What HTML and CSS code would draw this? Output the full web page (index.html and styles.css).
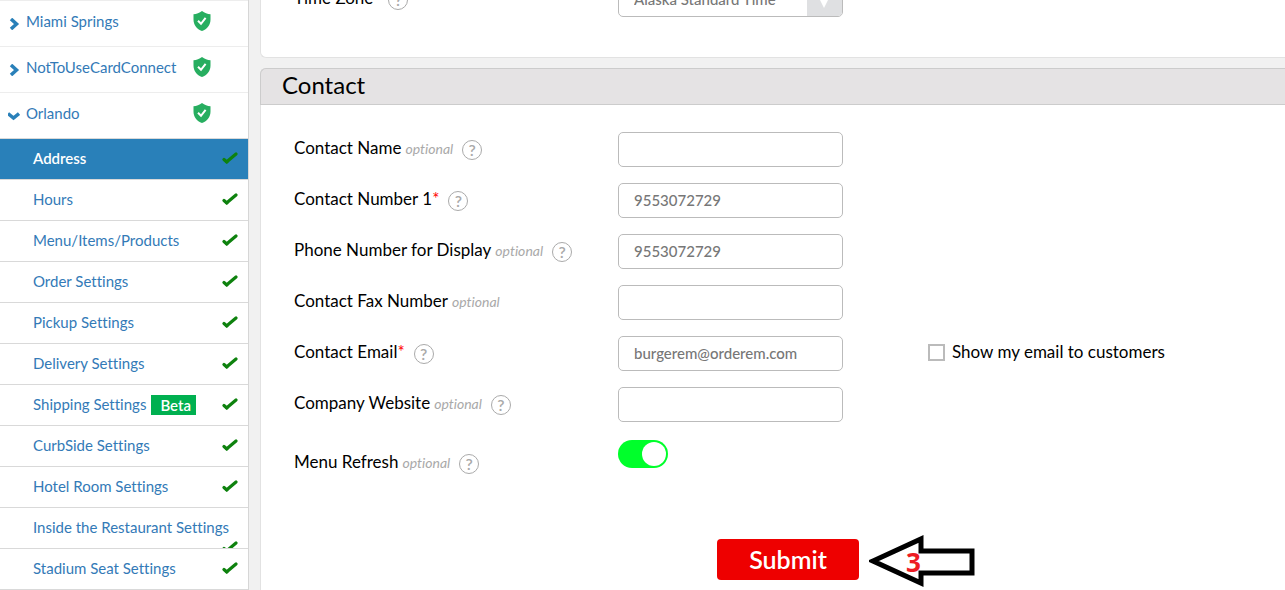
FILE: index.html
```html
<!DOCTYPE html>
<html lang="en">
<head>
<meta charset="utf-8">
<title>Location Settings</title>
<link rel="stylesheet" href="styles.css">
</head>
<body>
<svg width="0" height="0" class="symbols" aria-hidden="true">
  <symbol id="shield" viewBox="0 0 18 20"><path fill="#27ae60" d="M9 0C6.500 2 3.500 3 .5 3.200v5.300C.5 14 3.700 18 9 20c5.300-2 8.500-6 8.500-11.500V3.200C14.500 3 11.500 2 9 0z"/><path fill="none" stroke="#fff" stroke-width="2" d="M5 9.700l3 3.100 4.600-6"/></symbol>
  <symbol id="check" viewBox="0 0 16 12"><path fill="none" stroke="#0e820e" stroke-width="3.200" stroke-linecap="round" d="M2 7.500L4.800 10" /><path fill="none" stroke="#0e820e" stroke-width="3.200" stroke-linecap="round" d="M4.800 9.800L14 2"/></symbol>
  <symbol id="right" viewBox="0 0 12 12"><path fill="none" stroke="#2980b9" stroke-width="3.500" d="M3 1l5.500 5L3 11"/></symbol>
  <symbol id="down" viewBox="0 0 12 12"><path fill="none" stroke="#2980b9" stroke-width="3.500" d="M0 3.500l5.500 4.500L11 3.500"/></symbol>
</svg>
<div class="page">
  <nav class="sidebar">
    <ul class="locations">
      <li><a href="#"><svg class="chevron"><use href="#right"/></svg><span class="place">Miami Springs</span><svg class="shield"><use href="#shield"/></svg></a></li>
      <li><a href="#"><svg class="chevron"><use href="#right"/></svg><span class="place">NotToUseCardConnect</span><svg class="shield"><use href="#shield"/></svg></a></li>
      <li><a href="#"><svg class="chevron"><use href="#down"/></svg><span class="place">Orlando</span><svg class="shield"><use href="#shield"/></svg></a></li>
    </ul>
    <ul class="pages">
      <li class="active"><a href="#"><span>Address</span><svg class="check"><use href="#check"/></svg></a></li>
      <li><a href="#"><span>Hours</span><svg class="check"><use href="#check"/></svg></a></li>
      <li><a href="#"><span>Menu/Items/Products</span><svg class="check"><use href="#check"/></svg></a></li>
      <li><a href="#"><span>Order Settings</span><svg class="check"><use href="#check"/></svg></a></li>
      <li><a href="#"><span>Pickup Settings</span><svg class="check"><use href="#check"/></svg></a></li>
      <li><a href="#"><span>Delivery Settings</span><svg class="check"><use href="#check"/></svg></a></li>
      <li><a href="#"><span>Shipping Settings</span><span class="beta">Beta</span><svg class="check"><use href="#check"/></svg></a></li>
      <li><a href="#"><span>CurbSide Settings</span><svg class="check"><use href="#check"/></svg></a></li>
      <li><a href="#"><span>Hotel Room Settings</span><svg class="check"><use href="#check"/></svg></a></li>
      <li class="long"><a href="#"><span>Inside the Restaurant Settings</span><svg class="check"><use href="#check"/></svg></a></li>
      <li><a href="#"><span>Stadium Seat Settings</span><svg class="check"><use href="#check"/></svg></a></li>
    </ul>
  </nav>
  <main class="main">
    <section class="card region">
      <div class="row">
        <div class="caption"><label for="zone">Time Zone</label><button type="button" class="help zone-help">?</button></div>
        <div class="picker">
          <select id="zone" class="field"><option>Alaska Standard Time</option></select>
          <svg class="arrow" viewBox="0 0 35 33"><path fill="#fff" d="M11 13h12l-6 12z"/></svg>
        </div>
      </div>
    </section>
    <section class="card contact">
      <h2>Contact</h2>
      <form class="form">
        <div class="row">
          <div class="caption"><label for="name">Contact Name</label><em>optional</em><button type="button" class="help">?</button></div>
          <input id="name" class="field" type="text">
        </div>
        <div class="row">
          <div class="caption"><label for="number">Contact Number 1<span class="required">*</span></label><button type="button" class="help">?</button></div>
          <input id="number" class="field" type="text" value="9553072729">
        </div>
        <div class="row">
          <div class="caption"><label for="display">Phone Number for Display</label><em>optional</em><button type="button" class="help">?</button></div>
          <input id="display" class="field" type="text" value="9553072729">
        </div>
        <div class="row">
          <div class="caption"><label for="fax">Contact Fax Number</label><em>optional</em></div>
          <input id="fax" class="field" type="text">
        </div>
        <div class="row">
          <div class="caption"><label for="email">Contact Email<span class="required">*</span></label><button type="button" class="help">?</button></div>
          <input id="email" class="field" type="text" value="burgerem@orderem.com">
          <div class="option"><input id="show" class="box" type="checkbox"><label for="show">Show my email to customers</label></div>
        </div>
        <div class="row">
          <div class="caption"><label for="site">Company Website</label><em>optional</em><button type="button" class="help">?</button></div>
          <input id="site" class="field" type="text">
        </div>
        <div class="row refresh">
          <div class="caption"><label for="refresh">Menu Refresh</label><em>optional</em><button type="button" class="help">?</button></div>
          <input id="refresh" class="toggle" type="checkbox" checked>
        </div>
        <div class="actions">
          <button type="submit" class="submit">Submit</button>
          <div class="pointer">
            <svg viewBox="0 0 108 52" width="108" height="52"><path fill="#fff" stroke="#000" stroke-width="5" d="M4 26L52 4v12h51v22H52v10z"/></svg>
            <span class="step">3</span>
          </div>
        </div>
      </form>
    </section>
  </main>
</div>
</body>
</html>
```
FILE: styles.css
```css
* { box-sizing: border-box; }
body { margin: 0; background: #f1f1f1; color: #000; font-family: Lato, "Open Sans", sans-serif; font-size: 17px; line-height: 20px; font-variant-ligatures: none; }
ul { list-style: none; margin: 0; padding: 0; }
button, input, select { font-family: inherit; }
.symbols { position: absolute; }
.page { display: flex; height: 100vh; overflow: hidden; }

.sidebar { flex: 0 0 249px; align-self: flex-start; background: #fff; border-right: 1px solid #d6d6d6; font-size: 15px; }
.sidebar a { display: flex; align-items: center; color: #337ab7; text-decoration: none; white-space: nowrap; }
.locations li { height: 46px; border-top: 1px solid #ededed; }
.locations a { padding: 10px 37px 0 8px; }
.chevron { width: 12px; height: 12px; margin: 4px 6px 0 0; }
.place { flex: 1; padding-bottom: 2px; }
.shield { width: 18px; height: 20px; margin-bottom: 2px; }
.pages li { height: 41px; border-top: 1px solid #d9d9d9; overflow: hidden; position: relative; }
.pages li:last-child { height: 42px; border-bottom: 1px solid #d9d9d9; }
.pages a { height: 40px; padding: 0 10px 0 33px; }
.pages span { padding-bottom: 2px; }
.pages .active a { background: #2980b9; color: #fff; font-weight: 600; }
.check { width: 16px; height: 12px; margin: 0 0 2px auto; }
.long .check { position: absolute; right: 10px; bottom: -7px; }
.pages .beta { margin-left: 5px; padding: 0 5px 0 9px; background: #00b050; color: #fff; font-weight: 600; }

.main { flex: 1; min-width: 0; padding-left: 11px; }
.card { background: #fff; border: 1px solid #e2e2e2; border-right: 0; }
.region { margin: -18px 0 10px; padding: 0 0 40px 33px; border-top: 0; border-radius: 0 0 0 6px; }
.contact { border-radius: 6px 0 0 0; min-height: 540px; }
.contact h2 { margin: -1px 0 0 -1px; padding: 0 21px; height: 37px; line-height: 32px; background: #e5e3e4; border: 1px solid #ccc; border-right: 0; border-radius: 6px 0 0 0; font-size: 24px; font-weight: 400; }
.form { padding: 27px 0 0 33px; }
.row { display: grid; grid-template-columns: 324px 225px 1fr; align-items: center; }
.form .row { margin-bottom: 16px; }
.caption { display: flex; align-items: center; white-space: nowrap; }
.caption label, .option label { padding-bottom: 4px; }
.caption em { margin-left: 4px; padding-bottom: 2px; color: #a9a9a9; font-size: 14px; }
.required { color: #f00; }
.help { width: 20px; height: 20px; margin-left: 9px; padding: 0; border: 1px solid #aaa; border-radius: 50%; background: #fff; color: #aaa; font-size: 16px; font-weight: 600; line-height: 16px; }
.zone-help { margin-left: 15px; }
.field { display: block; width: 100%; height: 35px; padding: 0 15px 2px; border: 1px solid #bbb; border-radius: 5px; background: #fff; color: #777; font-size: 15px; font-weight: 500; }
.picker { position: relative; }
.picker .field { appearance: none; }
.arrow { position: absolute; top: 1px; right: 1px; width: 35px; height: 33px; background: #dfe0e2; border-radius: 0 4px 4px 0; pointer-events: none; }
.option { display: flex; align-items: center; gap: 7px; margin-left: 85px; }
.box { appearance: none; width: 17px; height: 17px; margin: 0 0 2px; border: 2px solid #bbb; background: #fff; }
.toggle { appearance: none; width: 50px; height: 28px; margin: 0; border-radius: 14px; background: #00ff2b; display: flex; justify-content: flex-end; padding: 2px; }
.toggle::before { content: ""; width: 24px; height: 24px; border-radius: 50%; background: #fff; }
.refresh { align-items: start; padding-top: 2px; }
.refresh .caption { margin-top: 12px; }
.actions { display: flex; align-items: center; padding: 43px 0 0 423px; }
.submit { width: 142px; height: 41px; margin-bottom: 4px; padding: 0; border: 0; border-radius: 4px; background: #ee0000; color: #fff; font-size: 25px; font-weight: 600; line-height: 40px; }
.pointer { position: relative; margin-left: 10px; height: 52px; }
.step { position: absolute; left: 37px; top: 14px; color: #ed1c24; font: 700 26px/26px "Open Sans", sans-serif; }
```
